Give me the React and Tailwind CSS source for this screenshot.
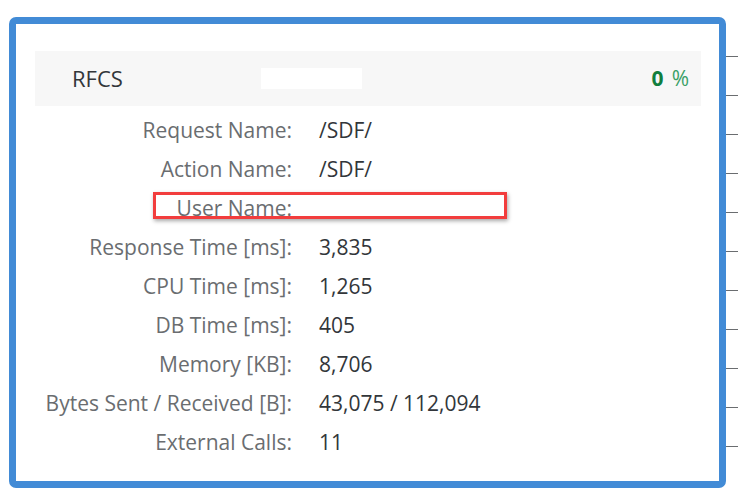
const rows = [
  { label: "Request Name:", value: "/SDF/" },
  { label: "Action Name:", value: "/SDF/" },
  { label: "User Name:", value: "" },
  { label: "Response Time [ms]:", value: "3,835" },
  { label: "CPU Time [ms]:", value: "1,265" },
  { label: "DB Time [ms]:", value: "405" },
  { label: "Memory [KB]:", value: "8,706" },
  { label: "Bytes Sent / Received [B]:", value: "43,075 / 112,094" },
  { label: "External Calls:", value: "11" },
];

export default function App() {
  return (
    <div
      className="w-[738px] h-[496px] bg-white flex overflow-hidden relative"
      style={{ fontFamily: '"Open Sans", Arial, sans-serif' }}
    >
      <div className="mt-[17px] ml-[9px] w-[717px] h-[471px] border-[7px] border-[#428bd6] rounded-[7px] pt-[27px] pl-[19px] pr-[18px]">
        {/* header strip */}
        <div className="h-[55px] bg-[#f7f7f7] flex items-center pl-[37px] pr-[12px]">
          <span className="text-[22px] text-[#32363a]">RFCS</span>
          <div className="ml-[138px] w-[101px] h-[21px] bg-white" />
          <div className="ml-auto flex items-baseline gap-[8px] text-[21px]">
            <span className="font-bold text-[#107e3e]">0</span>
            <span className="text-[#3aa066]">%</span>
          </div>
        </div>

        <div className="mt-[5px] flex flex-col">
          {rows.map((r) => (
            <div key={r.label} className="h-[39px] flex items-center text-[21px]">
              <div className="w-[257px] text-right text-[#6a6d70] whitespace-nowrap">{r.label}</div>
              <div className="ml-[27px] text-[#32363a] whitespace-nowrap">{r.value}</div>
            </div>
          ))}
        </div>
      </div>

      {/* ticks of the table behind */}
      <div className="flex flex-col pt-[18px] w-[12px]">
        {Array.from({ length: 11 }).map((_, i) => (
          <div key={i} className="h-[39px] border-b-[1.5px] border-[#6a6d70] shrink-0" />
        ))}
      </div>

      {/* highlight box */}
      <div className="absolute left-[153px] top-[192px] w-[354px] h-[27px] border-[3px] border-[#f23d3d] shadow-[1px_2px_4px_rgba(0,0,0,0.35)]" />
    </div>
  );
}
